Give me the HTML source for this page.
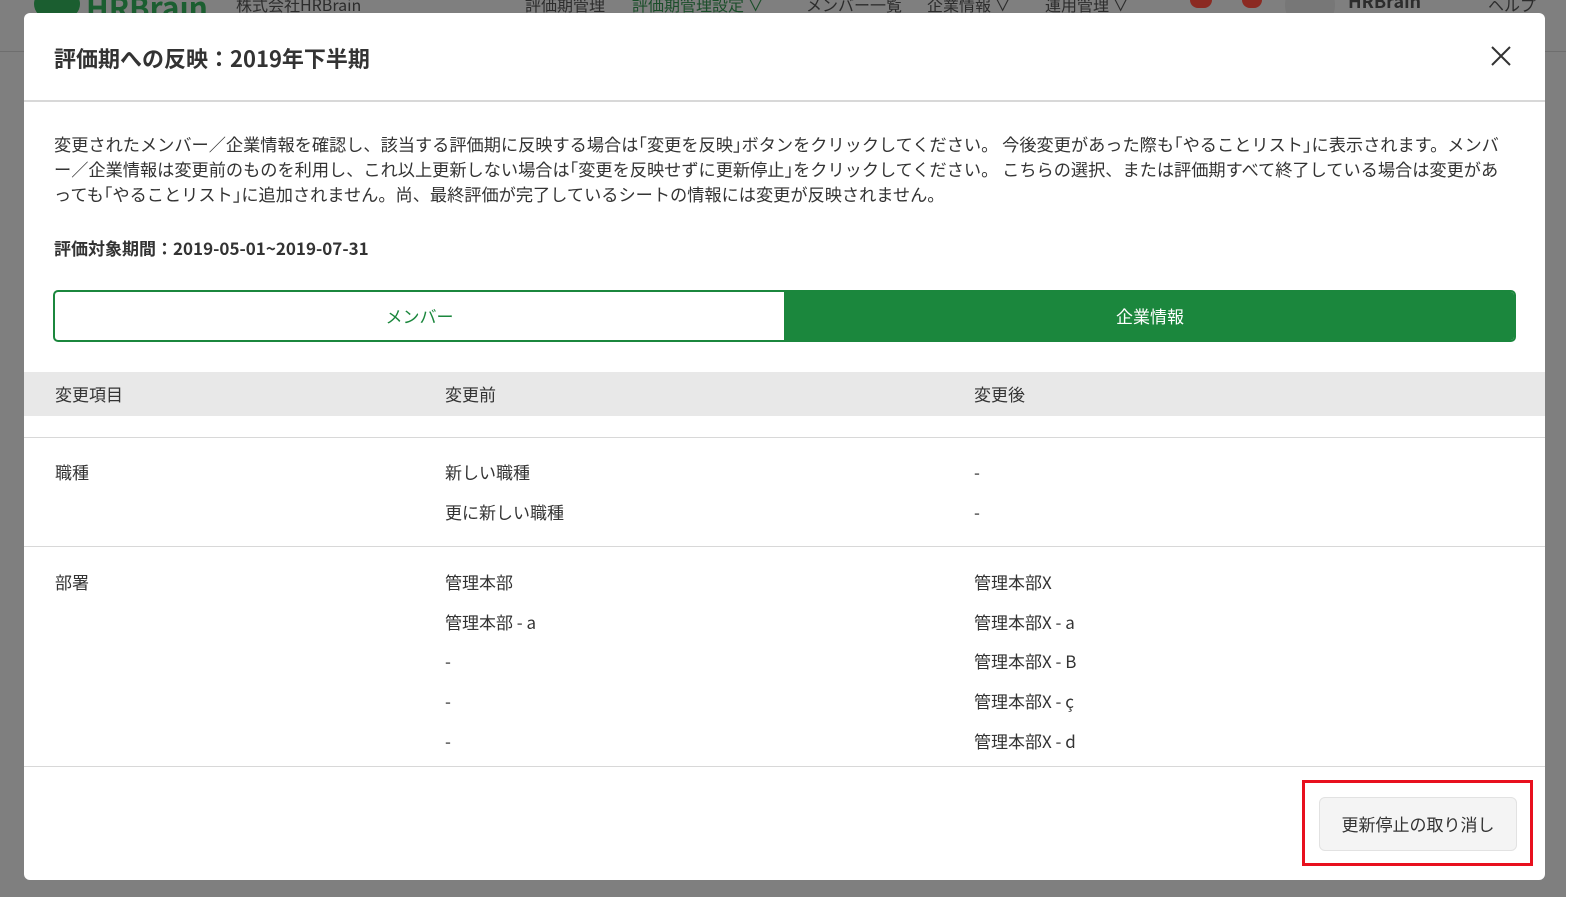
<!DOCTYPE html>
<html><head><meta charset="utf-8"><style>
*{margin:0;padding:0;box-sizing:border-box}
body{width:1578px;height:916px;position:relative;overflow:hidden;background:#fff;font-family:"Noto Sans CJK JP","Liberation Sans",sans-serif;color:#333}
.bg{position:absolute;left:0;top:0;width:1566px;height:897px;background:#7f7f7f}
.nav{position:absolute;top:0;left:0;width:1566px;height:52px;border-bottom:1px solid #6e6e6e;color:#2c2c2c;font-size:16px}
.nav span{position:absolute;top:-8px}
.modal{position:absolute;left:24px;top:13px;width:1521px;height:867px;background:#fff;border-radius:6px}
.a{position:absolute;white-space:nowrap}
.t{font-size:17px;line-height:20px}
.line{position:absolute;left:0;width:1521px;height:1px;background:#d8d8d8}
</style></head><body>
<div class="bg"><div class="nav">
<span style="left:34px;top:-10px;width:46px;height:28px;border-radius:14px;background:#1b5e30"></span>
<span style="left:86px;top:-16px;font-size:30px;font-weight:bold;color:#1b5e30">HRBrain</span>
<span style="left:236px">株式会社HRBrain</span>
<span style="left:525px">評価期管理</span>
<span style="left:632px;color:#1b4e2a">評価期管理設定 ∨</span>
<span style="left:806px">メンバー一覧</span>
<span style="left:927px">企業情報 ∨</span>
<span style="left:1045px">運用管理 ∨</span>
<span style="left:1190px;top:-8px;width:22px;height:16px;border-radius:8px;background:#8b2a22"></span>
<span style="left:1242px;top:-8px;width:20px;height:16px;border-radius:8px;background:#8b2a22"></span>
<span style="left:1285px;top:-20px;width:50px;height:50px;border-radius:25px;background:#777"></span>
<span style="left:1348px;top:-12px;font-weight:bold;font-size:18px">HRBrain</span>
<span style="left:1488px">ヘルプ</span>
</div></div>
<div class="modal">
<div class="a" style="left:30px;top:30px;font-size:22px;line-height:30px;font-weight:bold;color:#333">評価期への反映：2019年下半期</div>
<svg class="a" style="left:1467px;top:33px" width="20" height="20" viewBox="0 0 20 20"><path d="M1 1L19 19M19 1L1 19" stroke="#333" stroke-width="2" fill="none"/></svg>
<div class="line" style="top:87px;height:2px"></div>
<div class="a" style="left:30px;top:118px;font-size:17.2px;line-height:25px">変更されたメンバー／企業情報を確認し、該当する評価期に反映する場合は｢変更を反映｣ボタンをクリックしてください。 今後変更があった際も｢やることリスト｣に表示されます。メンバ<br>ー／企業情報は変更前のものを利用し、これ以上更新しない場合は｢変更を反映せずに更新停止｣をクリックしてください。 こちらの選択、または評価期すべて終了している場合は変更があ<br>っても｢やることリスト｣に追加されません。尚、最終評価が完了しているシートの情報には変更が反映されません。</div>
<div class="a t" style="left:30px;top:225px;font-weight:bold">評価対象期間：2019-05-01~2019-07-31</div>
<div class="a" style="left:29px;top:277px;width:1463px;height:52px;border:2px solid #1b873d;border-radius:5px;overflow:hidden">
<div class="a" style="left:0;top:0;width:729px;height:48px;text-align:center;line-height:48px;color:#1b873d;font-size:17px">メンバー</div>
<div class="a" style="left:729px;top:0;width:732px;height:48px;background:#1b873d;text-align:center;line-height:48px;color:#fff;font-size:17px">企業情報</div>
</div>
<div class="a" style="left:0;top:359px;width:1521px;height:44px;background:#e8e8e8"></div>
<div class="a t" style="left:31px;top:371px">変更項目</div>
<div class="a t" style="left:421px;top:371px">変更前</div>
<div class="a t" style="left:950px;top:371px">変更後</div>
<div class="line" style="top:424px"></div>
<div class="a t" style="left:31px;top:449px">職種</div>
<div class="a t" style="left:421px;top:449px">新しい職種</div>
<div class="a t" style="left:421px;top:489px">更に新しい職種</div>
<div class="a t" style="left:950px;top:449px">-</div>
<div class="a t" style="left:950px;top:489px">-</div>
<div class="line" style="top:533px"></div>
<div class="a t" style="left:31px;top:559px">部署</div>
<div class="a t" style="left:421px;top:559px">管理本部</div>
<div class="a t" style="left:421px;top:599px">管理本部 - a</div>
<div class="a t" style="left:421px;top:638px">-</div>
<div class="a t" style="left:421px;top:678px">-</div>
<div class="a t" style="left:421px;top:718px">-</div>
<div class="a t" style="left:950px;top:559px">管理本部X</div>
<div class="a t" style="left:950px;top:599px">管理本部X - a</div>
<div class="a t" style="left:950px;top:638px">管理本部X - B</div>
<div class="a t" style="left:950px;top:678px">管理本部X - ç</div>
<div class="a t" style="left:950px;top:718px">管理本部X - d</div>
<div class="line" style="top:753px"></div>
<div class="a" style="left:1295px;top:784px;width:198px;height:54px;background:#f4f4f4;border:1px solid #e2e2e2;border-radius:6px;text-align:center;line-height:52px;font-size:17px">更新停止の取り消し</div>
<div class="a" style="left:1278px;top:767px;width:231px;height:86px;border:3px solid #e8101e"></div>
</div>
</body></html>
